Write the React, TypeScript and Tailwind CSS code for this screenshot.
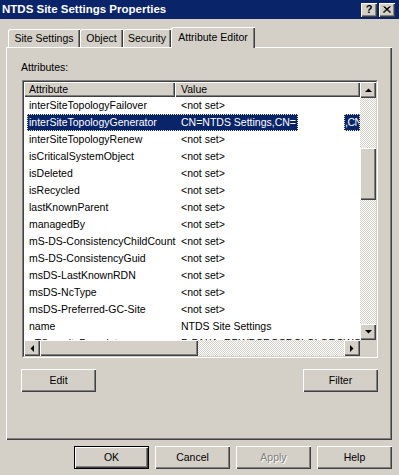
const raised =
  "bg-[#d4d0c8] shadow-[inset_1px_1px_0_#fff,inset_-1px_-1px_0_#404040,inset_-2px_-2px_0_#808080]";
const checker =
  "bg-[repeating-conic-gradient(#fff_0%_25%,#d4d0c8_0%_50%)] bg-[length:2px_2px]";

const rows: [string, string][] = [
  ["interSiteTopologyFailover", "<not set>"],
  ["interSiteTopologyGenerator", "CN=NTDS Settings,CN="],
  ["interSiteTopologyRenew", "<not set>"],
  ["isCriticalSystemObject", "<not set>"],
  ["isDeleted", "<not set>"],
  ["isRecycled", "<not set>"],
  ["lastKnownParent", "<not set>"],
  ["managedBy", "<not set>"],
  ["mS-DS-ConsistencyChildCount", "<not set>"],
  ["mS-DS-ConsistencyGuid", "<not set>"],
  ["msDS-LastKnownRDN", "<not set>"],
  ["msDS-NcType", "<not set>"],
  ["msDS-Preferred-GC-Site", "<not set>"],
  ["name", "NTDS Site Settings"],
  ["nTSecurityDescriptor", "D:PAI(A;;RPWPCRCCDCLCLORCWOWDSDDTSW;;;DA)"],
];

const Arrow = ({ dir }: { dir: "up" | "down" | "left" | "right" }) => {
  const pts = {
    up: "0,4 7,4 3.5,0.5",
    down: "0,0 7,0 3.5,3.5",
    left: "4,0 4,7 0.5,3.5",
    right: "0,0 0,7 3.5,3.5",
  }[dir];
  const vertical = dir === "up" || dir === "down";
  return (
    <svg width={vertical ? 7 : 4} height={vertical ? 4 : 7} viewBox={vertical ? "0 0 7 4" : "0 0 4 7"}>
      <polygon points={pts} fill="#000" />
    </svg>
  );
};

const Button = ({ label, isDefault, disabled }: { label: string; isDefault?: boolean; disabled?: boolean }) => (
  <div className={`w-[75px] h-[23px] ${isDefault ? "border border-black" : ""}`}>
    <div
      className={`w-full h-full flex items-center justify-center ${raised} ${
        disabled ? "text-[#808080] [text-shadow:1px_1px_0_#fff]" : "text-black"
      }`}
    >
      {label}
    </div>
  </div>
);

const Tab = ({ label, w }: { label: string; w: string }) => (
  <div
    className={`${w} h-[18px] flex items-center justify-center rounded-tl-[2px] shadow-[inset_1px_1px_0_#fff,inset_-1px_0_0_#404040,inset_-2px_0_0_#808080]`}
  >
    {label}
  </div>
);

export default function App() {
  return (
    <div className="w-[399px] h-[475px] bg-[#d4d0c8] font-['Liberation_Sans',Arial,sans-serif] text-[10.5px] leading-[13px] text-black overflow-hidden">
      {/* title bar */}
      <div className="h-[19px] bg-[#0a246a] flex items-center pl-[2px] pr-[4px]">
        <span className="text-white font-bold text-[11.5px] flex-1">NTDS Site Settings Properties</span>
        <div className={`w-[16px] h-[14px] flex items-center justify-center font-bold text-[11px] ${raised}`}>?</div>
        <div className={`w-[16px] h-[14px] ml-[2px] flex items-center justify-center ${raised}`}>
          <svg width="8" height="7" viewBox="0 0 8 7">
            <path d="M0.5 0.5 L7 6.5 M1.5 0.5 L8 6.5 M6.5 0.5 L0 6.5 M7.5 0.5 L1 6.5" stroke="#000" strokeWidth="1" />
          </svg>
        </div>
      </div>

      {/* tabs */}
      <div className="mt-[8px] h-[20px] pl-[8px] flex items-end">
        <Tab label="Site Settings" w="w-[72px]" />
        <Tab label="Object" w="w-[43px]" />
        <Tab label="Security" w="w-[48px]" />
        <div className="relative z-10 w-[84px] h-[21px] mb-[-1px] bg-[#d4d0c8] flex items-start justify-center pt-[4px] rounded-tl-[2px] shadow-[inset_1px_1px_0_#fff,inset_-1px_0_0_#404040,inset_-2px_0_0_#808080]">
          Attribute Editor
        </div>
      </div>

      {/* panel */}
      <div className={`mx-[6px] w-[386px] h-[393px] pt-[14px] pl-[15px] ${raised}`}>
        <div className="h-[13px]">Attributes:</div>

        <div className="mt-[6px] ml-[1px] w-[356px] h-[278px] border border-t-[#808080] border-l-[#808080] border-r-white border-b-white">
          <div className="w-full h-full border border-t-[#404040] border-l-[#404040] border-r-[#d4d0c8] border-b-[#d4d0c8] bg-white grid grid-cols-[336px_16px] grid-rows-[258px_16px]">
            {/* list content */}
            <div className="overflow-hidden">
              <div className="flex h-[15px]">
                <div className={`w-[151px] pl-[5px] flex items-center ${raised}`}>Attribute</div>
                <div className={`w-[185px] pl-[6px] flex items-center ${raised}`}>Value</div>
              </div>
              {rows.map(([a, v], i) =>
                i === 1 ? (
                  <div key={a} className="h-[17px] flex text-white whitespace-nowrap">
                    <div className="w-[3px] bg-white" />
                    <div className="w-[271px] bg-[#0a246a] border border-dotted border-[#f3eea0] flex items-center overflow-hidden">
                      <span className="w-[153px] shrink-0 pl-[1px]">{a}</span>
                      <span>{v}</span>
                    </div>
                    <div className="w-[46px] bg-white" />
                    <div className="w-[16px] bg-[#0a246a] border border-dotted border-[#f3eea0] flex items-center overflow-hidden tracking-[-0.5px]">
                      ,CN
                    </div>
                  </div>
                ) : (
                  <div key={a} className="h-[17px] flex items-center whitespace-nowrap">
                    <span className="w-[157px] shrink-0 pl-[5px]">{a}</span>
                    <span>{v}</span>
                  </div>
                )
              )}
            </div>

            {/* vertical scrollbar */}
            <div className={`flex flex-col ${checker}`}>
              <div className={`h-[16px] flex items-center justify-center ${raised}`}>
                <Arrow dir="up" />
              </div>
              <div className="h-[50px]" />
              <div className={`h-[52px] ${raised}`} />
              <div className="flex-1" />
              <div className={`h-[16px] flex items-center justify-center ${raised}`}>
                <Arrow dir="down" />
              </div>
            </div>

            {/* horizontal scrollbar */}
            <div className={`flex ${checker}`}>
              <div className={`w-[16px] flex items-center justify-center ${raised}`}>
                <Arrow dir="left" />
              </div>
              <div className={`w-[158px] ${raised}`} />
              <div className="flex-1" />
              <div className={`w-[16px] flex items-center justify-center ${raised}`}>
                <Arrow dir="right" />
              </div>
            </div>
            <div className="bg-[#d4d0c8]" />
          </div>
        </div>

        <div className="mt-[11px] w-[357px] flex justify-between">
          <Button label="Edit" />
          <Button label="Filter" />
        </div>
      </div>

      {/* dialog buttons */}
      <div className="mt-[6px] pr-[7px] flex justify-end gap-[6px]">
        <Button label="OK" isDefault />
        <Button label="Cancel" />
        <Button label="Apply" disabled />
        <Button label="Help" />
      </div>
    </div>
  );
}
